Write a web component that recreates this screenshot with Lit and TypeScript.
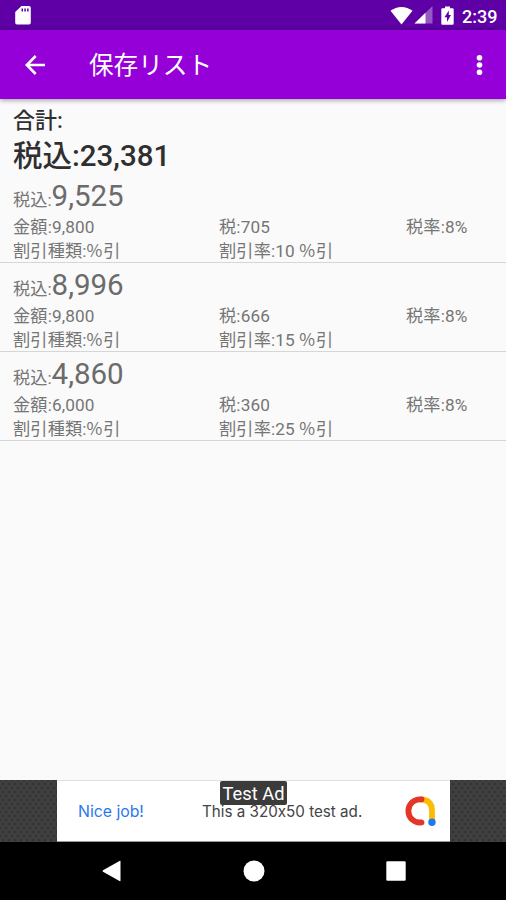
import { LitElement, html, css } from "lit";
import { customElement, property } from "lit/decorators.js";

interface Entry {
  total: string;
  price: string;
  tax: string;
  rate: string;
  discount: string;
}

const ENTRIES: Entry[] = [
  { total: "9,525", price: "9,800", tax: "705", rate: "8%", discount: "10" },
  { total: "8,996", price: "9,800", tax: "666", rate: "8%", discount: "15" },
  { total: "4,860", price: "6,000", tax: "360", rate: "8%", discount: "25" },
];

@customElement("status-bar")
class StatusBar extends LitElement {
  static styles = css`
    :host {
      display: flex;
      align-items: center;
      height: 30px;
      box-sizing: border-box;
      padding: 0 9px 0 14px;
      background: #5e00a5;
      color: #fff;
    }
    .sd { width: 17px; height: 20px; }
    .right { display: flex; align-items: center; margin-left: auto; }
    .wifi { width: 23px; height: 19px; }
    .cell { width: 19px; height: 18px; margin-left: 1px; }
    .battery { width: 13px; height: 19px; margin-left: 8px; }
    .clock {
      width: 35px;
      margin: 3px 0 0 8px;
      font: 500 18px/24px Roboto, sans-serif;
      white-space: nowrap;
    }
  `;
  render() {
    return html`
      <svg class="sd" viewBox="0 0 17 20">
        <path d="M7.5 1H15q1.8 0 1.8 1.8v15q0 1.8-1.8 1.8H3Q1.2 19.6 1.2 17.8V7Z" fill="#fff" />
        <path d="M7.5 3.5h1.5v3H7.5zM10.3 3.5h1.5v3h-1.5zM13.1 3.5h1.5v3h-1.5z" fill="#5e00a5" />
      </svg>
      <div class="right">
        <svg class="wifi" viewBox="0 0 23 19">
          <path d="M0.5 4.8Q5.5 1 11.5 1t11 3.8L11.5 18.5Z" fill="#fff" />
        </svg>
        <svg class="cell" viewBox="0 0 19 18">
          <path d="M18.5 0V17.5H0.5Z" fill="#fff" opacity=".35" />
          <path d="M11.5 6.8V17.5H0.5Z" fill="#fff" />
        </svg>
        <svg class="battery" viewBox="0 0 13 19">
          <path d="M4 0.5h5v1.8h2.5q1.2 0 1.2 1.2v14q0 1.2-1.2 1.2h-10q-1.2 0-1.2-1.2v-14q0-1.2 1.2-1.2H4z" fill="#fff" />
          <path d="M7.8 4.5L3.5 11.2h2.5v4.8l4-7H7.8z" fill="#5e00a5" />
        </svg>
        <span class="clock">2:39</span>
      </div>
    `;
  }
}

@customElement("tool-bar")
class ToolBar extends LitElement {
  @property() heading = "";
  static styles = css`
    :host {
      display: flex;
      align-items: center;
      height: 69px;
      box-sizing: border-box;
      padding: 0 20px 0 25px;
      background: #9500d9;
      color: #fff;
      box-shadow: 0 1px 5px rgba(0, 0, 0, 0.42);
      position: relative;
      z-index: 1;
    }
    .back { width: 21px; height: 20px; }
    .title {
      margin: 2px 0 0 43px;
      font: 400 24.6px/36px Roboto, "Noto Sans CJK JP", sans-serif;
    }
    .more { width: 13px; height: 24px; margin-left: auto; }
  `;
  render() {
    return html`
      <svg class="back" viewBox="0 0 21 20">
        <path d="M20 10H2M10.7 1L1.8 10l8.9 9" fill="none" stroke="#fff" stroke-width="2.6" />
      </svg>
      <span class="title">${this.heading}</span>
      <svg class="more" viewBox="0 0 13 24" fill="#fff">
        <circle cx="6.5" cy="4.7" r="2.8" />
        <circle cx="6.5" cy="12" r="2.8" />
        <circle cx="6.5" cy="19.3" r="2.8" />
      </svg>
    `;
  }
}

@customElement("entry-row")
class EntryRow extends LitElement {
  @property({ attribute: false }) entry!: Entry;
  static styles = css`
    :host {
      display: block;
      height: 89px;
      box-sizing: border-box;
      padding: 5px 0 0 13px;
      border-bottom: 1px solid #d6d6d6;
      color: #757575;
      font: 17.2px/24px Roboto, "Noto Sans CJK JP", sans-serif;
      white-space: nowrap;
    }
    .total { height: 34px; line-height: 34px; margin-bottom: 2px; }
    .amount { font-size: 29.5px; color: #6b6b6b; }
    .grid {
      display: grid;
      grid-template-columns: 206px 187px 1fr;
      grid-auto-rows: 24px;
      letter-spacing: 0.13px;
    }
    .unit {
      font-family: "Noto Sans CJK JP", sans-serif;
      line-height: 0;
      letter-spacing: 0.8px;
    }
  `;
  render() {
    const e = this.entry;
    return html`
      <div class="total">税込:<span class="amount">${e.total}</span></div>
      <div class="grid">
        <span>金額:${e.price}</span>
        <span>税:${e.tax}</span>
        <span>税率:${e.rate}</span>
        <span>割引種類:<span class="unit">%引</span></span>
        <span>割引率:${e.discount} <span class="unit">%引</span></span>
      </div>
    `;
  }
}

@customElement("ad-banner")
class AdBanner extends LitElement {
  static styles = css`
    :host {
      display: flex;
      justify-content: center;
      height: 62px;
      box-sizing: border-box;
      padding-left: 1px;
      background-color: #404040;
      background-image: radial-gradient(circle, #333 1.2px, transparent 1.8px),
        radial-gradient(circle, #333 1.2px, transparent 1.8px);
      background-size: 6px 8px;
      background-position: 0 0, 3px 4px;
    }
    .card {
      position: relative;
      display: flex;
      align-items: center;
      width: 393px;
      box-sizing: border-box;
      padding: 1px 13px 0 21px;
      border-top: 1px solid #dfe2e2;
      border-bottom: 1px solid #9a9a9a;
      background: #fff;
      font: 15.2px/20px Inter, sans-serif;
      font-feature-settings: "calt" 0;
      white-space: nowrap;
    }
    .cta { width: 124px; color: #2b78f0; font-size: 15.8px; }
    .copy { color: #444; }
    .logo { width: 32px; height: 32px; margin: 0 0 2px auto; }
    .tag {
      position: absolute;
      top: 0;
      left: 163px;
      width: 67px;
      height: 24px;
      border-radius: 2px;
      background: #3b3b3b;
      color: #fff;
      font: 18.3px/25px Roboto, sans-serif;
      text-align: center;
    }
  `;
  render() {
    return html`
      <div class="card">
        <span class="cta">Nice job!</span>
        <span class="copy">This a 320x50 test ad.</span>
        <svg class="logo" viewBox="0 0 32 32" fill="none" stroke-width="5.8" stroke-linecap="round">
          <path d="M16 4.5C23 4.5 27 8.5 27 15.5V27" stroke="#fbbc04" />
          <path d="M16.5 4.4A11.6 11.6 0 1 0 16.5 27.4" stroke="#e33629" />
          <circle cx="27" cy="27.2" r="3.7" fill="#2478ee" />
        </svg>
        <span class="tag">Test Ad</span>
      </div>
    `;
  }
}

@customElement("nav-bar")
class NavBar extends LitElement {
  static styles = css`
    :host {
      display: flex;
      align-items: center;
      justify-content: center;
      gap: 120px;
      height: 58px;
      box-sizing: border-box;
      padding-left: 1px;
      background: #000;
    }
    svg { width: 22px; height: 22px; fill: #fff; }
  `;
  render() {
    return html`
      <svg viewBox="0 0 22 22"><path d="M19.5 1.5V20.5Q19.5 21.5 18.5 21L2 11.8Q1 11 2 10.2L18.5 1Q19.5 0.5 19.5 1.5Z" /></svg>
      <svg viewBox="0 0 22 22"><circle cx="11" cy="11" r="10.5" /></svg>
      <svg viewBox="0 0 22 22"><rect x="1.3" y="1.3" width="19.4" height="19.4" rx="1.2" /></svg>
    `;
  }
}

@customElement("app-root")
class AppRoot extends LitElement {
  static styles = css`
    :host {
      display: flex;
      flex-direction: column;
      height: 900px;
      background: #fafafa;
      overflow: hidden;
    }
    .list { flex: 1; }
    .sum {
      height: 75px;
      box-sizing: border-box;
      padding: 9px 0 0 13px;
      color: #2f2f2f;
      font: 500 22px/26px Roboto, "Noto Sans CJK JP", sans-serif;
      white-space: nowrap;
    }
    .grand { margin-top: 4px; font-size: 29.5px; line-height: 36px; }
  `;
  render() {
    return html`
      <status-bar></status-bar>
      <tool-bar heading="保存リスト"></tool-bar>
      <div class="list">
        <div class="sum">
          <div>合計:</div>
          <div class="grand">税込:23,381</div>
        </div>
        ${ENTRIES.map((e) => html`<entry-row .entry=${e}></entry-row>`)}
      </div>
      <ad-banner></ad-banner>
      <nav-bar></nav-bar>
    `;
  }
}
